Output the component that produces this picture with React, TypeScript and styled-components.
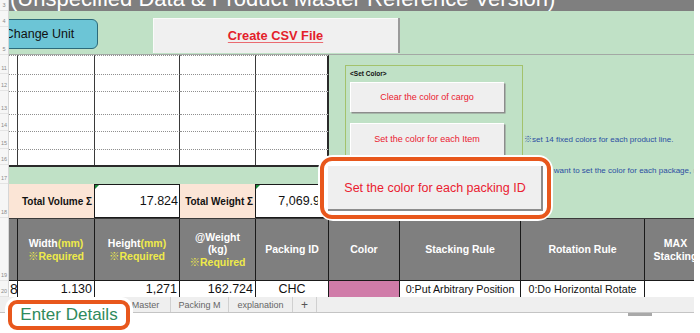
import React from 'react';
import styled, { createGlobalStyle } from 'styled-components';

const GlobalStyle = createGlobalStyle`
  html, body { margin: 0; padding: 0; background: #fff; }
  body { font-family: "Liberation Sans", "Noto Sans CJK JP", Arial, sans-serif; }
  #root { width: 700px; height: 333px; }
  button { font-family: inherit; }
`;

const GREEN = '#c0e1c6';
const FONT = `"Liberation Sans", "Noto Sans CJK JP", Arial, sans-serif`;

const Screen = styled.div`
  position: relative;
  width: 700px;
  height: 333px;
  overflow: hidden;
  background: #fff;
  display: flex;
  flex-direction: column;
  font-family: ${FONT};
`;

const SheetArea = styled.div`
  display: flex;
  width: 694px;
  height: 297px;
  flex: none;
`;

const RowHeaders = styled.div`
  width: 9px;
  flex: none;
  display: flex;
  flex-direction: column;
  background: #f6f6f6;
  border-right: 1px solid #d6d6d6;
  box-sizing: border-box;
`;

const RowHead = styled.div<{ $h: number }>`
  height: ${p => p.$h}px;
  flex: none;
  box-sizing: border-box;
  border-bottom: 1px solid #e4e4e4;
  display: flex;
  align-items: flex-end;
  justify-content: center;
  padding-bottom: 2px;
  font-size: 5.5px;
  line-height: 6px;
  color: #8a8a8a;
  overflow: hidden;
`;

const Content = styled.div`
  width: 685px;
  flex: none;
  display: flex;
  flex-direction: column;
  overflow: hidden;
`;

const TitleBar = styled.div`
  height: 11px;
  flex: none;
  background: #7f7f7f;
  overflow: hidden;
`;

const TitleText = styled.div`
  margin-top: -12px;
  margin-left: 1px;
  font-size: 22px;
  line-height: 22px;
  color: #fff;
  white-space: nowrap;
`;

const Toolbar = styled.div`
  height: 44px;
  flex: none;
  box-sizing: border-box;
  background: ${GREEN};
  border-bottom: 1px solid #a3a8a4;
  display: flex;
  align-items: flex-start;
`;

const UnitButton = styled.button`
  margin: 8px 0 0 -28px;
  width: 117px;
  height: 30px;
  flex: none;
  background: #6cc5d6;
  border: 1.5px solid #2c6a7a;
  border-radius: 6px;
  font-size: 12.5px;
  color: #111;
  padding: 0;
  text-align: center;
`;

const CsvButton = styled.button`
  margin: 7px 0 0 55px;
  width: 247px;
  height: 35px;
  flex: none;
  background: #f0f0f0;
  border: none;
  border-right: 2px solid #9a9a9a;
  box-shadow: inset 1px 1px 0 #fafafa;
  font-size: 12.8px;
  font-weight: bold;
  color: #e3202a;
  text-decoration: underline;
  text-decoration-color: #ea6a70;
  text-underline-offset: 2px;
  padding: 0;
`;

const Middle = styled.div`
  display: flex;
  height: 163px;
  flex: none;
`;

const LeftBlock = styled.div`
  width: 320px;
  flex: none;
  display: flex;
  flex-direction: column;
`;

const InputGrid = styled.div`
  display: grid;
  grid-template-columns: 9px 77px 85px 76px 73px;
  grid-template-rows: 19px 17px 23px 17px 18px 16px;
  background: #fff;
  border-bottom: 2px solid #2a2a2a;
  box-sizing: content-box;
`;

const GridCell = styled.div<{ $col: number }>`
  box-sizing: border-box;
  border-top: 1px dotted #8f8f8f;
  border-right: ${p => (p.$col === 4 ? '2px solid #2a2a2a' : p.$col === 0 ? '1.5px solid #3a3a3a' : '1px solid #3a3a3a')};
`;

const GreenRow = styled.div`
  height: 17px;
  flex: none;
  background: ${GREEN};
`;

const TotalsRow = styled.div`
  height: 34px;
  flex: none;
  display: grid;
  grid-template-columns: 85px 86px 75px 74px;
`;

const TotalLabel = styled.div`
  background: #fbe5d6;
  display: flex;
  align-items: center;
  justify-content: flex-end;
  padding-right: 2px;
  font-size: 10px;
  font-weight: bold;
  color: #111;
  white-space: nowrap;
`;

const TotalValue = styled.div`
  position: relative;
  background: #fff;
  border: 1.5px solid #1a1a1a;
  box-sizing: border-box;
  display: flex;
  align-items: center;
  justify-content: flex-end;
  padding-right: 1px;
  font-size: 12.5px;
  color: #111;
  &::before {
    content: '';
    position: absolute;
    left: 0;
    top: 0;
    border-top: 4px solid #1d8a3a;
    border-right: 4px solid transparent;
  }
`;

const GreenPanel = styled.div`
  flex: 1;
  background: ${GREEN};
  display: flex;
  align-items: flex-start;
  padding: 10px 0 0 16px;
  overflow: hidden;
  min-width: 0;
`;

const GroupBox = styled.div`
  width: 178px;
  height: 136px;
  flex: none;
  box-sizing: border-box;
  border: 1.5px solid #a3c26c;
  padding: 4px 0 0 4px;
  display: flex;
  flex-direction: column;
`;

const GroupLabel = styled.div`
  font-size: 6.5px;
  line-height: 8px;
  font-weight: bold;
  color: #111;
  margin-bottom: 4px;
`;

const FormButton = styled.button<{ $h: number; $gap: number }>`
  width: 154px;
  height: ${p => p.$h}px;
  margin-bottom: ${p => p.$gap}px;
  background: #efefef;
  border: none;
  box-shadow: inset 1px 1px 0 #fff, 1.5px 1.5px 0 #8c8c8c;
  font-size: 9px;
  color: #ea2030;
  padding: 0;
`;

const Notes = styled.div`
  display: flex;
  flex-direction: column;
  padding-top: 70px;
  padding-left: 1px;
  min-width: 0;
`;

const Note = styled.div<{ $gap: number }>`
  font-size: 8px;
  line-height: 10px;
  color: #2b4ea2;
  white-space: nowrap;
  margin-bottom: ${p => p.$gap}px;
`;

const COLS = '9px 77px 85px 76px 73px 71px 121px 124px 62px';

const HeaderRow = styled.div`
  display: grid;
  grid-template-columns: ${COLS};
  height: 63px;
  flex: none;
  background: #7f7f7f;
  border-top: 1px solid #3a3a3a;
  border-bottom: 1px solid #1a1a1a;
  box-sizing: border-box;
  width: max-content;
`;

const HeadCell = styled.div`
  border-right: 1px solid #1a1a1a;
  display: flex;
  flex-direction: column;
  align-items: center;
  justify-content: center;
  text-align: center;
  font-size: 10.5px;
  line-height: 12.5px;
  font-weight: bold;
  color: #fff;
  white-space: nowrap;
`;

const Yellow = styled.span`
  color: #eeea4a;
`;

const DataRow = styled.div`
  display: grid;
  grid-template-columns: ${COLS};
  height: 16px;
  flex: none;
  width: max-content;
`;

const DataCell = styled.div<{ $align?: string; $small?: boolean; $bg?: string }>`
  background: ${p => p.$bg || '#fff'};
  border-right: 1px solid #1a1a1a;
  display: flex;
  align-items: center;
  justify-content: ${p => p.$align || 'flex-end'};
  padding: 0 2px;
  font-size: ${p => (p.$small ? '10.7px' : '12.5px')};
  color: #111;
  white-space: nowrap;
  overflow: hidden;
`;

const IndexCell = styled.div`
  background: #fff;
  border-right: 1.5px solid #1a1a1a;
  font-size: 14px;
  line-height: 16px;
  padding-left: 1px;
  color: #111;
  overflow: hidden;
`;

const TabBar = styled.div`
  width: 694px;
  height: 16px;
  flex: none;
  box-sizing: border-box;
  background: #efefef;
  border-bottom: 1px solid #c4c4c4;
  display: flex;
  padding-left: 121px;
`;

const Tab = styled.div<{ $w: number }>`
  width: ${p => p.$w}px;
  flex: none;
  box-sizing: border-box;
  border-right: 1px solid #d0d0d0;
  display: flex;
  align-items: center;
  justify-content: center;
  font-size: 9px;
  color: #666;
`;

const PlusTab = styled(Tab)`
  font-size: 12px;
  color: #555;
`;

const BottomStrip = styled.div`
  flex: 1;
  display: flex;
  align-items: flex-start;
`;

const ScrollThumb = styled.div`
  margin-left: 628px;
  width: 24px;
  height: 3px;
  background: #a9a9a9;
`;

const PackCallout = styled.div`
  position: absolute;
  left: 318px;
  top: 155px;
  width: 235px;
  height: 66px;
  box-sizing: border-box;
  background: #fff;
  border-radius: 15px;
  padding: 2px;
`;

const CalloutRing = styled.div<{ $pad: string; $radius: number }>`
  height: 100%;
  box-sizing: border-box;
  border: 4px solid #e8571c;
  border-radius: ${p => p.$radius}px;
  padding: ${p => p.$pad};
  background: #fff;
  display: flex;
  align-items: center;
  justify-content: center;
`;

const BigFormButton = styled.button`
  width: 100%;
  height: 100%;
  background: #efefef;
  border: none;
  box-shadow: inset 1px 1px 0 #fff, inset -2px -2px 0 #8c8c8c;
  font-size: 12.5px;
  color: #ea2030;
  padding: 0;
`;

const EnterCallout = styled.div`
  position: absolute;
  left: 5px;
  top: 297px;
  width: 128px;
  height: 36px;
  box-sizing: border-box;
  background: #fff;
  border-radius: 12px;
  padding: 3px;
`;

const EnterText = styled.span`
  font-size: 17px;
  color: #2f8a5c;
  white-space: nowrap;
`;

const rowHeads: [string, number][] = [
  ['3', 11], ['4', 16], ['5', 28], ['11', 19], ['12', 17], ['13', 23], ['14', 17],
  ['15', 18], ['16', 16], ['17', 19], ['18', 34], ['19', 63], ['20', 16],
];

export default function App() {
  const gridCells = [];
  for (let r = 0; r < 6; r++) {
    for (let c = 0; c < 5; c++) {
      gridCells.push(<GridCell key={`${r}-${c}`} $col={c} />);
    }
  }
  return (
    <Screen>
      <GlobalStyle />
      <SheetArea>
        <RowHeaders>
          {rowHeads.map(([n, h]) => (
            <RowHead key={n} $h={h}>{n}</RowHead>
          ))}
        </RowHeaders>
        <Content>
          <TitleBar>
            <TitleText>(Unspecified Data &amp; Product Master Reference Version)</TitleText>
          </TitleBar>
          <Toolbar>
            <UnitButton>Change Unit</UnitButton>
            <CsvButton>Create CSV File</CsvButton>
          </Toolbar>
          <Middle>
            <LeftBlock>
              <InputGrid>{gridCells}</InputGrid>
              <GreenRow />
              <TotalsRow>
                <TotalLabel>Total Volume Σ</TotalLabel>
                <TotalValue>17.824</TotalValue>
                <TotalLabel>Total Weight Σ</TotalLabel>
                <TotalValue>7,069.94</TotalValue>
              </TotalsRow>
            </LeftBlock>
            <GreenPanel>
              <GroupBox>
                <GroupLabel>&lt;Set Color&gt;</GroupLabel>
                <FormButton $h={30} $gap={11}>Clear the color of cargo</FormButton>
                <FormButton $h={32} $gap={0}>Set the color for each Item</FormButton>
              </GroupBox>
              <Notes>
                <Note $gap={21}>※set 14 fixed colors for each product line.</Note>
                <Note $gap={0}>※If you want to set the color for each package, run this button.</Note>
              </Notes>
            </GreenPanel>
          </Middle>
          <HeaderRow>
            <HeadCell />
            <HeadCell>
              <div>Width<Yellow>(mm)</Yellow></div>
              <Yellow>※Required</Yellow>
            </HeadCell>
            <HeadCell>
              <div>Height<Yellow>(mm)</Yellow></div>
              <Yellow>※Required</Yellow>
            </HeadCell>
            <HeadCell>
              <div>@Weight</div>
              <div>(kg)</div>
              <Yellow>※Required</Yellow>
            </HeadCell>
            <HeadCell>Packing ID</HeadCell>
            <HeadCell>Color</HeadCell>
            <HeadCell>Stacking Rule</HeadCell>
            <HeadCell>Rotation Rule</HeadCell>
            <HeadCell>
              <div>MAX</div>
              <div>Stacking</div>
            </HeadCell>
          </HeaderRow>
          <DataRow>
            <IndexCell>8</IndexCell>
            <DataCell>1.130</DataCell>
            <DataCell>1,271</DataCell>
            <DataCell>162.724</DataCell>
            <DataCell $align="center">CHC</DataCell>
            <DataCell $bg="#d07ca9" />
            <DataCell $align="center" $small>0:Put Arbitrary Position</DataCell>
            <DataCell $align="center" $small>0:Do Horizontal Rotate</DataCell>
            <DataCell />
          </DataRow>
        </Content>
      </SheetArea>
      <TabBar>
        <Tab $w={50}>Master</Tab>
        <Tab $w={58}>Packing M</Tab>
        <Tab $w={64}>explanation</Tab>
        <PlusTab $w={24}>+</PlusTab>
      </TabBar>
      <BottomStrip>
        <ScrollThumb />
      </BottomStrip>

      <PackCallout>
        <CalloutRing $pad="4px 4px 4px 3px" $radius={12}>
          <BigFormButton>Set the color for each packing ID</BigFormButton>
        </CalloutRing>
      </PackCallout>
      <EnterCallout>
        <CalloutRing $pad="0" $radius={9}>
          <EnterText>Enter Details</EnterText>
        </CalloutRing>
      </EnterCallout>
    </Screen>
  );
}
